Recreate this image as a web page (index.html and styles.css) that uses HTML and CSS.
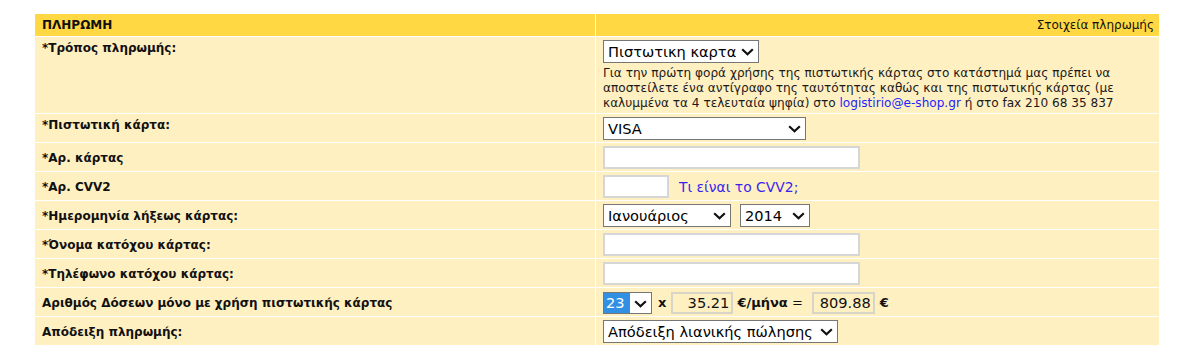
FILE: index.html
```html
<!DOCTYPE html>
<html lang="el">
<head>
<meta charset="utf-8">
<title>Πληρωμή</title>
<link rel="stylesheet" href="styles.css">
</head>
<body>
<div class="pay">
  <div class="cell head left">ΠΛΗΡΩΜΗ</div>
  <div class="cell head right">Στοιχεία πληρωμής</div>

  <div class="cell lbl top">*Τρόπος πληρωμής:</div>
  <div class="cell val first">
    <span class="sel s-method"><select><option>Πιστωτικη καρτα</option></select><svg class="chev" viewBox="0 0 13 8"><path d="M1.2 1.2 L6.5 6.3 L11.8 1.2"/></svg></span>
    <p class="help">Για την πρώτη φορά χρήσης της πιστωτικής κάρτας στο κατάστημά μας πρέπει να αποστείλετε ένα αντίγραφο της ταυτότητας καθώς και της πιστωτικής κάρτας (με καλυμμένα τα 4 τελευταία ψηφία) στο <a class="mail" href="#">logistirio@e-shop.gr</a> ή στο fax 210 68 35 837</p>
  </div>

  <div class="cell lbl top">*Πιστωτική κάρτα:</div>
  <div class="cell val">
    <span class="sel s-card"><select><option>VISA</option></select><svg class="chev" viewBox="0 0 13 8"><path d="M1.2 1.2 L6.5 6.3 L11.8 1.2"/></svg></span>
  </div>

  <div class="cell lbl">*Αρ. κάρτας</div>
  <div class="cell val"><input class="txt wide" type="text"></div>

  <div class="cell lbl">*Αρ. CVV2</div>
  <div class="cell val"><input class="txt cvv" type="text"><a class="cvvlink" href="#">Τι είναι το CVV2;</a></div>

  <div class="cell lbl">*Ημερομηνία λήξεως κάρτας:</div>
  <div class="cell val">
    <span class="sel s-month"><select><option>Ιανουάριος</option></select><svg class="chev" viewBox="0 0 13 8"><path d="M1.2 1.2 L6.5 6.3 L11.8 1.2"/></svg></span>
    <span class="sel s-year"><select><option>2014</option></select><svg class="chev" viewBox="0 0 13 8"><path d="M1.2 1.2 L6.5 6.3 L11.8 1.2"/></svg></span>
  </div>

  <div class="cell lbl">*Όνομα κατόχου κάρτας:</div>
  <div class="cell val"><input class="txt wide" type="text"></div>

  <div class="cell lbl">*Τηλέφωνο κατόχου κάρτας:</div>
  <div class="cell val"><input class="txt wide" type="text"></div>

  <div class="cell lbl">Αριθμός Δόσεων μόνο με χρήση πιστωτικής κάρτας</div>
  <div class="cell val inst">
    <span class="sel s-inst"><select><option>23</option></select><svg class="chev" viewBox="0 0 13 8"><path d="M1.2 1.2 L6.5 6.3 L11.8 1.2"/></svg></span>
    <b class="op">x</b>
    <input class="ro monthly" type="text" value="35.21" readonly>
    <span class="unit"><b>€/μήνα</b> =</span>
    <input class="ro total" type="text" value="809.88" readonly>
    <b class="eur">€</b>
  </div>

  <div class="cell lbl">Απόδειξη πληρωμής:</div>
  <div class="cell val">
    <span class="sel s-receipt"><select><option>Απόδειξη λιανικής πώλησης</option></select><svg class="chev" viewBox="0 0 13 8"><path d="M1.2 1.2 L6.5 6.3 L11.8 1.2"/></svg></span>
  </div>
</div>
</body>
</html>
```

FILE: styles.css
```css
* { box-sizing: border-box; }

body {
  margin: 0;
  background: #fff;
  font-family: "DejaVu Sans", Verdana, sans-serif;
  color: #111;
}

.pay {
  display: grid;
  grid-template-columns: 560px 563px;
  gap: 1px;
  margin: 14px 0 0 35px;
  width: 1124px;
}

.cell {
  background: #fff0c2;
  min-height: 28px;
}

.head {
  background: #ffd843;
  height: 22px;
  min-height: 0;
  font-size: 12px;
  display: flex;
  align-items: center;
}

.head.left {
  font-weight: bold;
  padding-left: 7px;
}

.head.right {
  justify-content: flex-end;
  padding-right: 5px;
}

.lbl {
  font-size: 12px;
  font-weight: bold;
  padding-left: 7px;
  display: flex;
  align-items: center;
  padding-top: 1px;
}

.lbl.top {
  align-items: flex-start;
  padding-top: 4px;
}

.val {
  padding: 2px 0 1px 7px;
  display: flex;
  align-items: center;
  gap: 9px;
}

.val.first {
  display: block;
  padding-top: 3px;
  padding-bottom: 2px;
}

.val.inst { gap: 0; }

.sel {
  position: relative;
  display: inline-block;
  vertical-align: top;
}

.sel select {
  appearance: none;
  -webkit-appearance: none;
  display: block;
  height: 23px;
  border: 1px solid #767676;
  border-radius: 0;
  background: #fff;
  font-family: "DejaVu Sans", Verdana, sans-serif;
  font-size: 14.6px;
  color: #000;
  padding: 0 22px 0 4px;
  margin: 0;
}

.chev {
  position: absolute;
  right: 5px;
  top: 8px;
  width: 13px;
  height: 8px;
  pointer-events: none;
}

.chev path {
  fill: none;
  stroke: #111;
  stroke-width: 2.2;
}

.s-method select { width: 156px; padding-right: 18px; }
.s-card select { width: 203px; }
.s-month select { width: 128px; }
.s-year select { width: 70px; }
.s-receipt select { width: 235px; padding-right: 18px; }

.s-inst select {
  width: 49px;
  height: 22px;
  color: #fff;
  padding-left: 2px;
  background: linear-gradient(to right, #3190e3 0 26px, #fff 26px);
}

.help {
  margin: 3px 0 0;
  font-size: 12.1px;
  line-height: 15px;
  color: #1a1a1a;
  padding-right: 4px;
}

.mail {
  color: #2424ff;
  text-decoration: none;
}

.txt {
  height: 23px;
  border: 2px solid #d6d6d6;
  background: #fff;
  margin: 0;
  padding: 0 3px;
  font-size: 14px;
  font-family: "DejaVu Sans", Verdana, sans-serif;
}

.txt.wide { width: 257px; }
.txt.cvv { width: 66px; margin-right: 1px; }

.cvvlink {
  font-size: 13.9px;
  color: #3a1ff0;
  text-decoration: none;
}

.op {
  font-size: 13px;
  margin: 0 5px 0 6px;
}

.ro {
  height: 22px;
  border: 2px solid #d8d5c8;
  background: transparent;
  text-align: right;
  font-size: 14.6px;
  font-family: "DejaVu Sans", Verdana, sans-serif;
  padding: 0 2px;
  color: #111;
  margin: 0;
}

.monthly { width: 62px; }
.total { width: 63px; }

.unit {
  font-size: 13px;
  margin: 0 9px 0 4px;
  white-space: nowrap;
}

.eur {
  font-size: 13px;
  margin-left: 5px;
}
```
